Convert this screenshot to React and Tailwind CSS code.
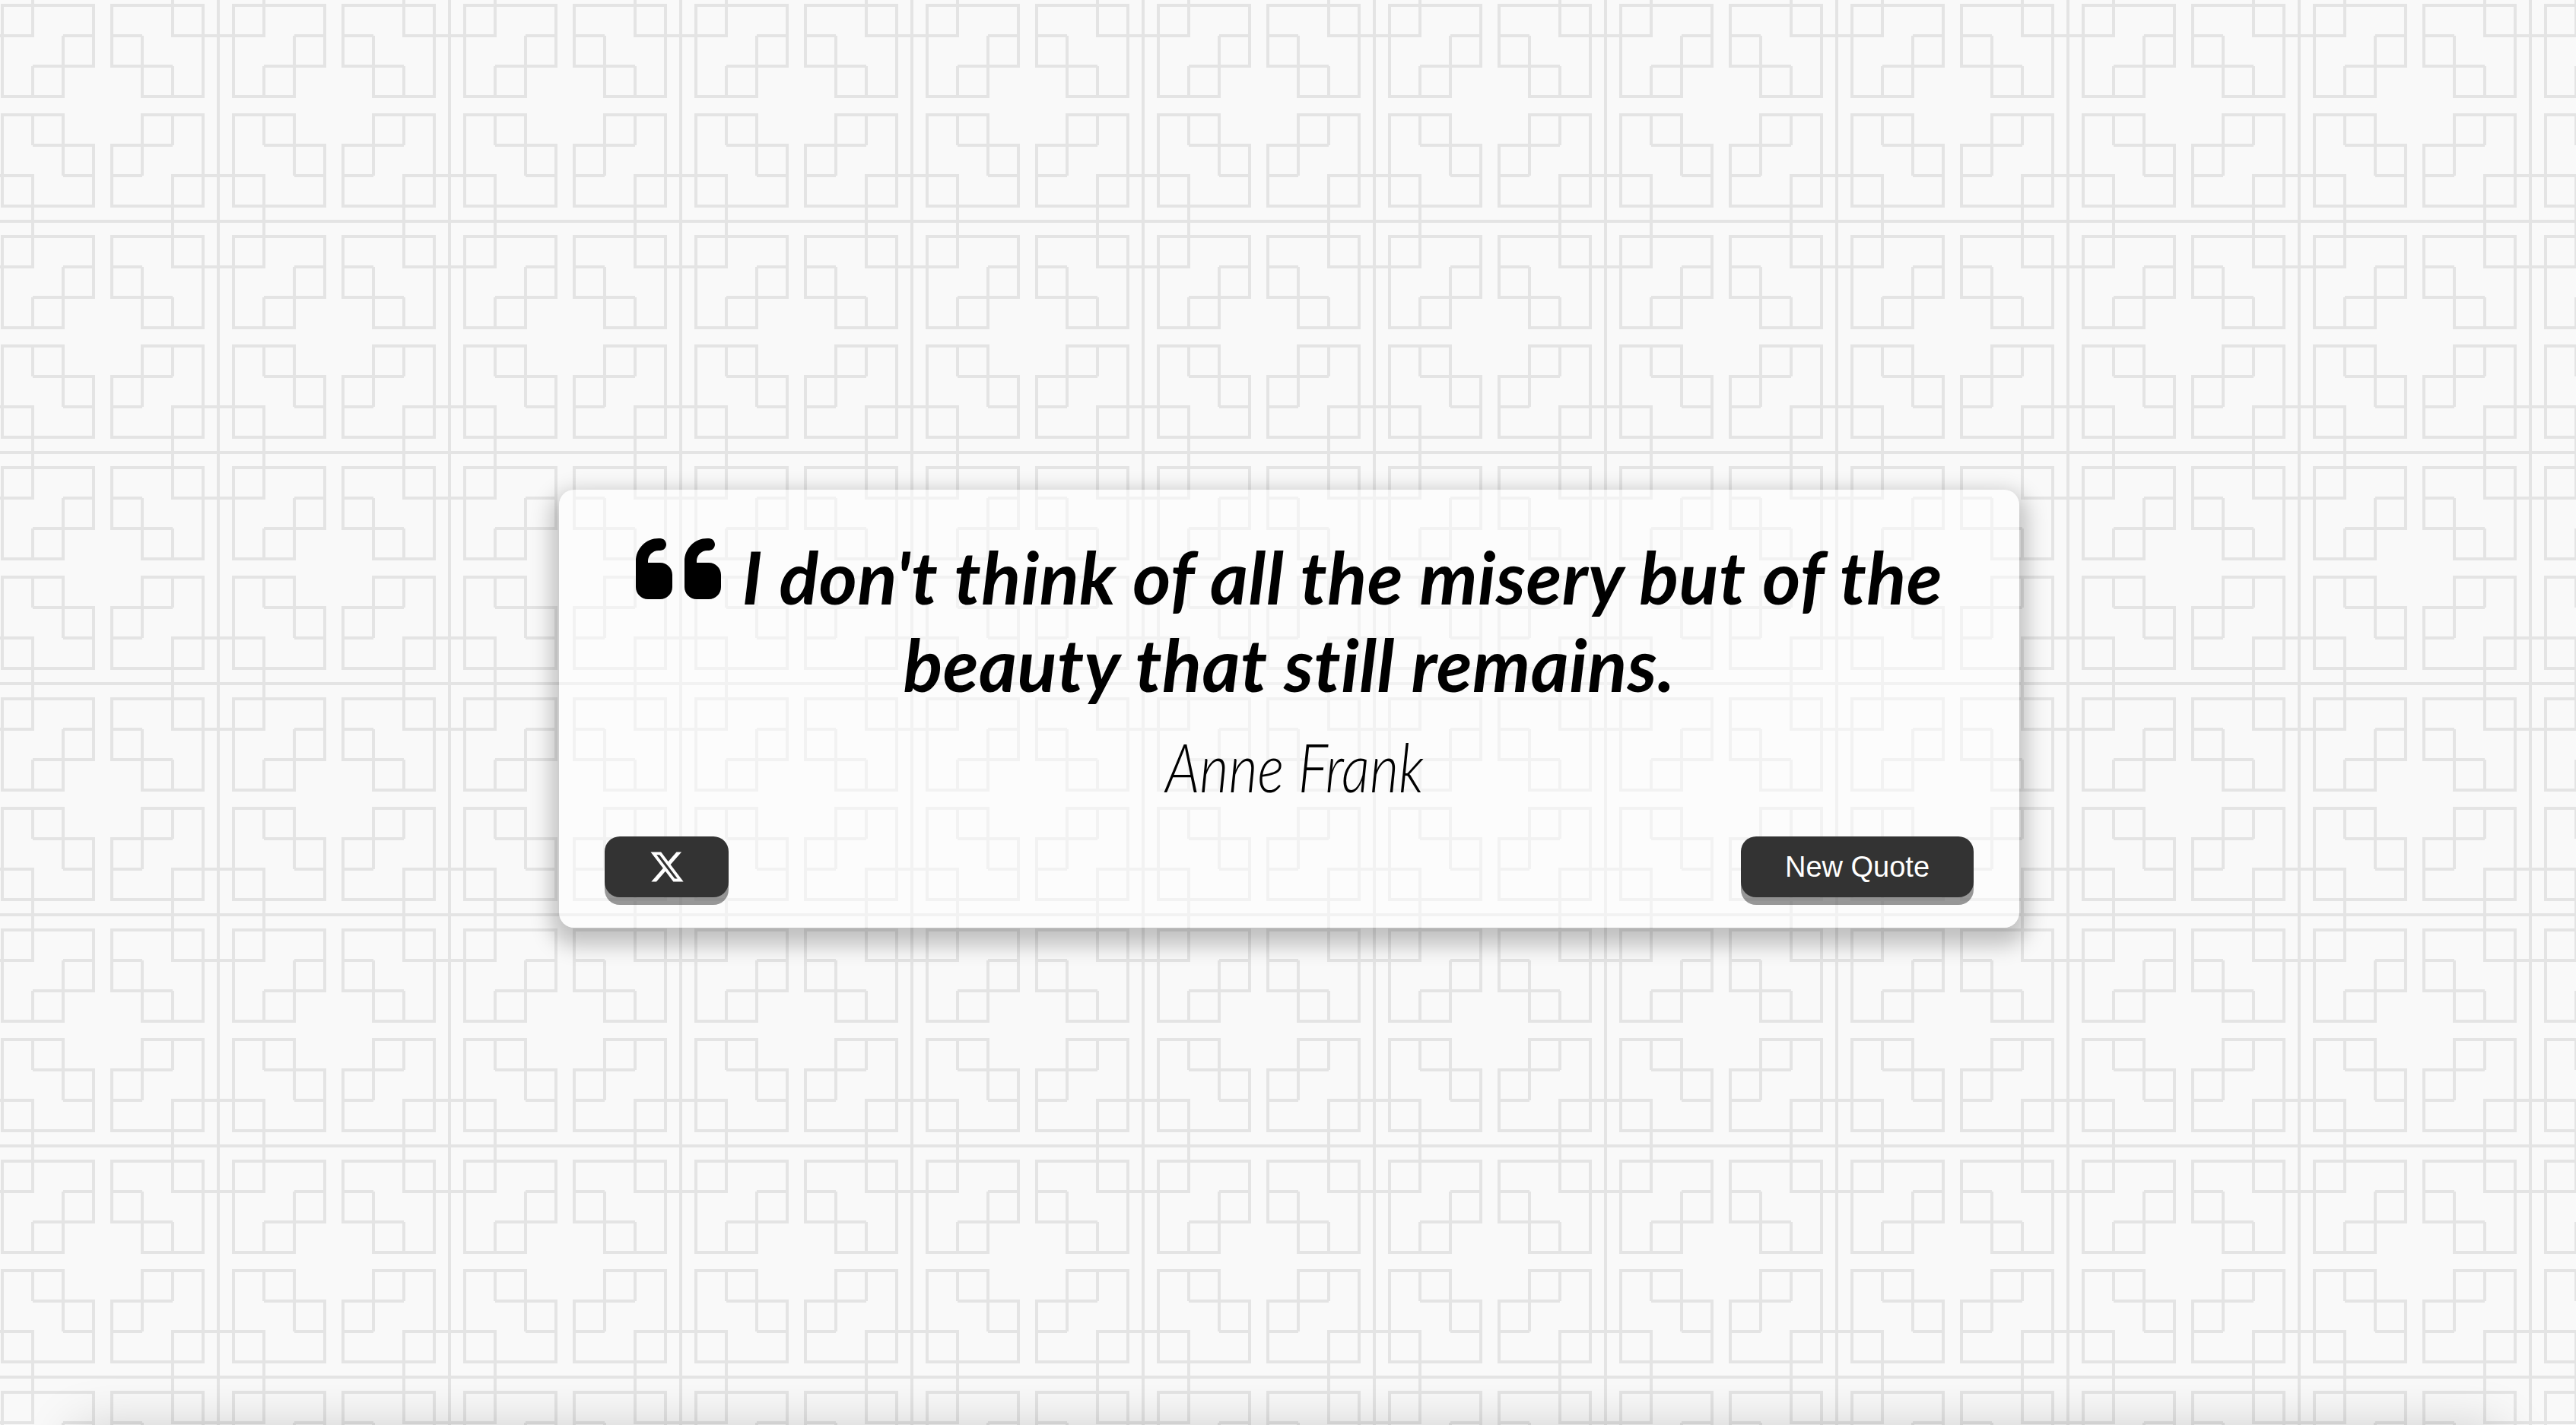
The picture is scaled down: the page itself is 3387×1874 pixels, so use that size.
import React from 'react';
import { FaQuoteLeft, FaXTwitter } from 'react-icons/fa6';

// Repeating lattice tile, 304px square
const TILE_PATH =
  "M3 7H123V87H83V127H3ZM43 -10V47H-10M83 47H123M83 47V127M43 87H123M43 87V127" +
  "M267 7H147V87H187V127H267ZM227 -10V47H314M187 47H147M187 47V127M227 87H147M227 87V127" +
  "M3 271H123V191H83V151H3ZM43 314V231H-10M83 231H123M83 231V151M43 191H123M43 191V151" +
  "M267 271H147V191H187V151H267ZM227 314V231H314M187 231H147M187 231V151M227 191H147M227 191V151" +
  "M-10 291H314M287 -10V314";

function Lattice() {
  return (
    <svg className="absolute inset-0 w-full h-full" xmlns="http://www.w3.org/2000/svg">
      <defs>
        <pattern id="lattice" width="304" height="304" patternUnits="userSpaceOnUse">
          <path d={TILE_PATH} fill="none" stroke="#e4e4e4" strokeWidth="4" />
        </pattern>
      </defs>
      <rect width="100%" height="100%" fill="url(#lattice)" />
    </svg>
  );
}

export default function App() {
  return (
    <div className="relative h-screen overflow-hidden bg-[#f9f9f9] flex flex-col">
      <Lattice />

      {/* Quote card */}
      <div className="relative shrink-0 ml-[735px] mt-[644px] w-[1920px] h-[576px] flex flex-col items-center rounded-[20px] bg-white/50 px-[60px] pt-[40px] pb-[40px] shadow-[0_13px_28px_10px_rgba(0,0,0,0.23)]">
        <p className="w-full text-center text-[96px] leading-[115px] tracking-[0.5px] text-black italic font-bold [font-variant-ligatures:none] font-['Lato',sans-serif]">
          <FaQuoteLeft className="inline-block mr-[6px] w-[112px] h-[128px] align-[-17px]" /> I don't think of all the misery but of the beauty that still remains.
        </p>
        {/* no handwriting font installed, so the name is squeezed to the same width */}
        <p className="shrink-0 mt-[28px] ml-[14px] w-[800px] scale-x-[0.84] text-center text-[88px] leading-[100px] text-black italic font-light font-['Lato',sans-serif]">
          Anne Frank
        </p>
        <div className="w-full mt-auto flex items-center justify-between">
          <button className="flex items-center justify-center w-[163px] h-[80px] rounded-[20px] bg-[#333333] text-white shadow-[0_10px_0_rgba(0,0,0,0.4)]">
            <FaXTwitter className="w-[48px] h-[48px]" />
          </button>
          <button className="flex items-center justify-center w-[306px] h-[80px] rounded-[20px] bg-[#333333] text-white text-[38px] font-['Liberation_Sans',sans-serif] shadow-[0_10px_0_rgba(0,0,0,0.4)]">
            New Quote
          </button>
        </div>
      </div>

      {/* Section below the fold, only its shadow reaches the viewport */}
      <div className="relative shrink-0 mt-[660px] mx-[100px] h-[200px] shadow-[0_0_70px_rgba(0,0,0,0.2)]" />
    </div>
  );
}
